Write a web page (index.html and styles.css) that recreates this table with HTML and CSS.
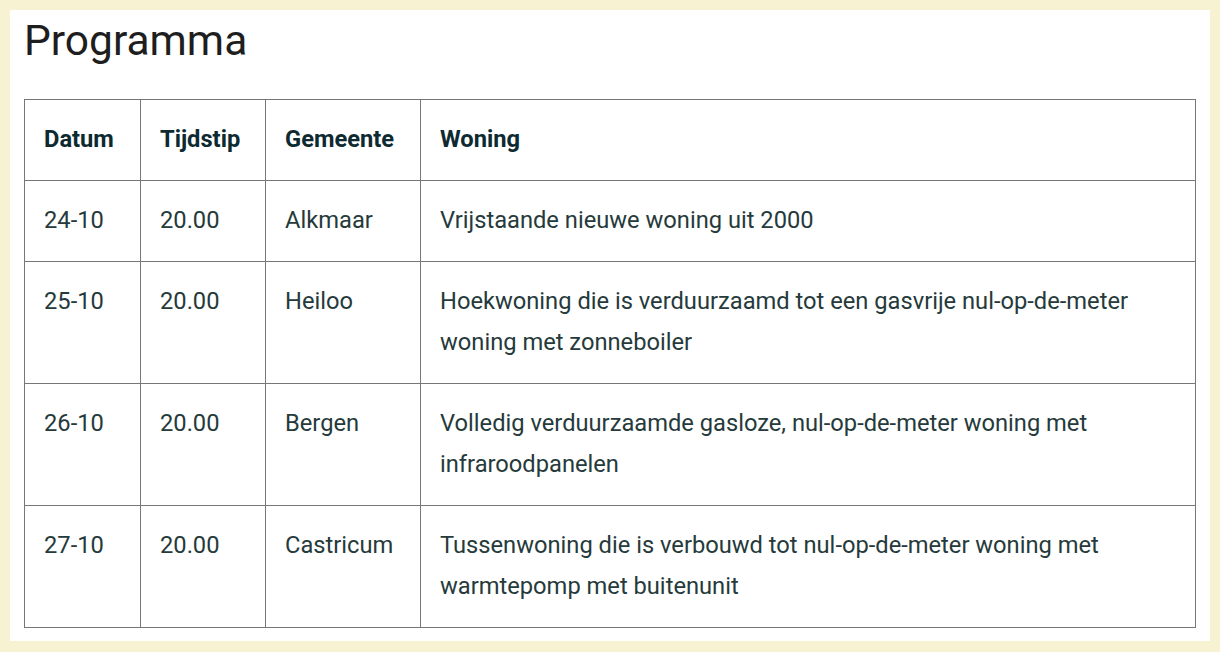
FILE: index.html
```html
<!DOCTYPE html>
<html lang="nl">
<head>
<meta charset="utf-8">
<title>Programma</title>
<link rel="stylesheet" href="styles.css">
</head>
<body>
<div class="frame">
  <main class="page">
    <h1 class="title">Programma</h1>
    <table class="program">
      <colgroup>
        <col class="c-datum">
        <col class="c-tijd">
        <col class="c-gem">
        <col class="c-won">
      </colgroup>
      <thead>
        <tr><th>Datum</th><th>Tijdstip</th><th>Gemeente</th><th>Woning</th></tr>
      </thead>
      <tbody>
        <tr><td>24-10</td><td>20.00</td><td>Alkmaar</td><td>Vrijstaande nieuwe woning uit 2000</td></tr>
        <tr><td>25-10</td><td>20.00</td><td>Heiloo</td><td>Hoekwoning die is verduurzaamd tot een gasvrije nul-op-de-meter woning met zonneboiler</td></tr>
        <tr><td>26-10</td><td>20.00</td><td>Bergen</td><td>Volledig verduurzaamde gasloze, nul-op-de-meter woning met infraroodpanelen</td></tr>
        <tr><td>27-10</td><td>20.00</td><td>Castricum</td><td>Tussenwoning die is verbouwd tot nul-op-de-meter woning met warmtepomp met buitenunit</td></tr>
      </tbody>
    </table>
  </main>
</div>
</body>
</html>
```

FILE: styles.css
```css
html, body {
  margin: 0;
  padding: 0;
}
body {
  background: #f7f2d2;
  font-family: Roboto, "Liberation Sans", sans-serif;
}
.frame {
  padding: 10px 10px 11px 10px;
  height: 652px;
  box-sizing: border-box;
}
.page {
  background: #ffffff;
  height: 100%;
  box-sizing: border-box;
  padding: 7px 14px 0 14px;
}
.title {
  margin: 0 0 34px 0;
  font-size: 42.5px;
  font-weight: 400;
  line-height: 48px;
  color: #1e1e1e;
}
.program {
  border-collapse: collapse;
  width: 1171px;
  table-layout: fixed;
  font-size: 23.7px;
  color: #263a3b;
}
.c-datum { width: 116px; }
.c-tijd { width: 125px; }
.c-gem { width: 155px; }
.c-won { width: 775px; }
.program th,
.program td {
  border: 1px solid #767676;
  padding: 19px 19px 20px 19px;
  line-height: 41px;
  text-align: left;
  vertical-align: top;
}
.program th {
  font-weight: 700;
  color: #0e2a31;
}
```
